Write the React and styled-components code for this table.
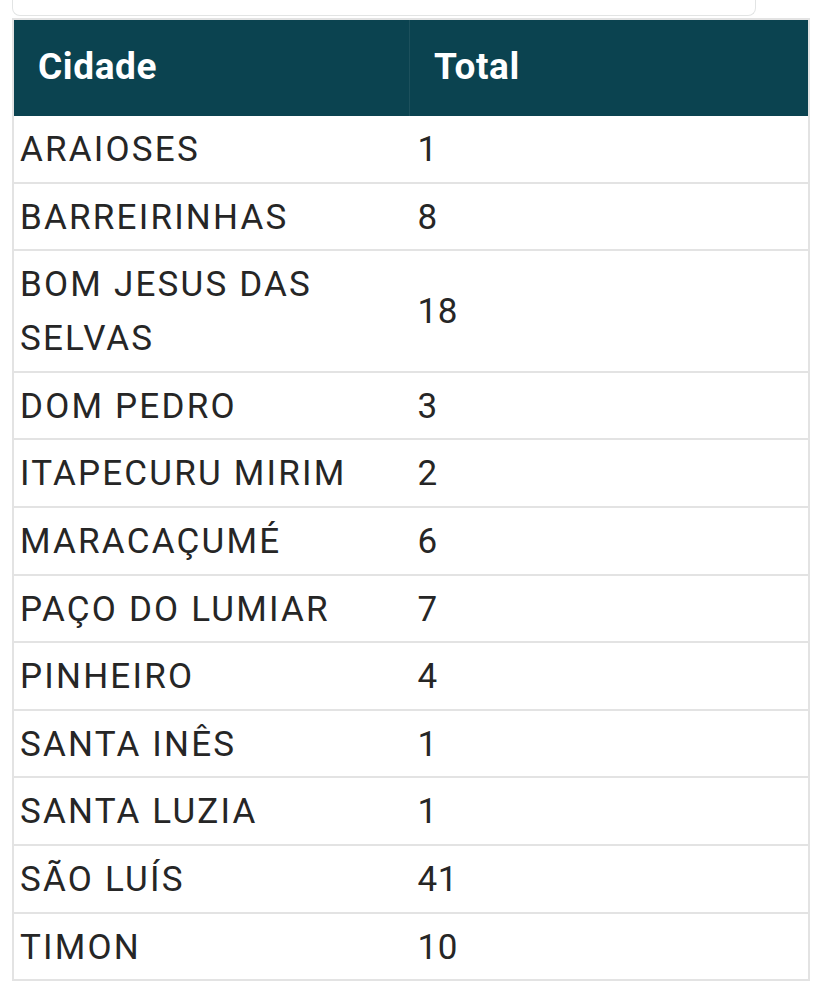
import React from "react";
import styled, { createGlobalStyle } from "styled-components";

const GlobalStyle = createGlobalStyle`
  body {
    margin: 0;
    background: #ffffff;
    font-family: Roboto, "Liberation Sans", sans-serif;
  }
`;

const Pagina = styled.div`
  padding: 0 19px 20px 12px;
`;

const CaixaTopo = styled.div`
  width: 742px;
  height: 15px;
  border: 1px solid #e2e4e4;
  border-top: none;
  border-radius: 0 0 8px 8px;
  margin-bottom: 2px;
`;

const Tabela = styled.table`
  width: 798px;
  border-collapse: collapse;
  border: 2px solid #e3e3e3;
`;

const Cabecalho = styled.th`
  background: #0b4350;
  color: #ffffff;
  font-weight: 700;
  font-size: 37px;
  line-height: 54px;
  letter-spacing: 0.6px;
  text-align: left;
  padding: 20px 24px 22px 24px;
  width: ${(p) => p.$largura || "auto"};
  border-left: 1px solid rgba(255, 255, 255, 0.07);
  &:first-child {
    border-left: none;
  }
`;

const Linha = styled.tr`
  border-bottom: 2px solid #e3e3e3;
`;

const Celula = styled.td`
  color: #262626;
  font-size: 35px;
  line-height: 54px;
  letter-spacing: ${(p) => (p.$numero ? "0.6px" : "2.2px")};
  text-transform: uppercase;
  padding: 7px 6px 4.6px ${(p) => (p.$numero ? "8px" : "6px")};
  vertical-align: middle;
`;

const cidades = [
  ["Araioses", 1],
  ["Barreirinhas", 8],
  ["Bom Jesus das Selvas", 18],
  ["Dom Pedro", 3],
  ["Itapecuru Mirim", 2],
  ["Maracaçumé", 6],
  ["Paço do Lumiar", 7],
  ["Pinheiro", 4],
  ["Santa Inês", 1],
  ["Santa Luzia", 1],
  ["São Luís", 41],
  ["Timon", 10],
];

const App = () => {
  return (
    <Pagina>
      <GlobalStyle />
      <CaixaTopo />
      <Tabela>
        <thead>
          <tr>
            <Cabecalho $largura="347px">Cidade</Cabecalho>
            <Cabecalho>Total</Cabecalho>
          </tr>
        </thead>
        <tbody>
          {cidades.map(([nome, total]) => (
            <Linha key={nome}>
              <Celula>{nome}</Celula>
              <Celula $numero>{total}</Celula>
            </Linha>
          ))}
        </tbody>
      </Tabela>
    </Pagina>
  );
};

export default App;
